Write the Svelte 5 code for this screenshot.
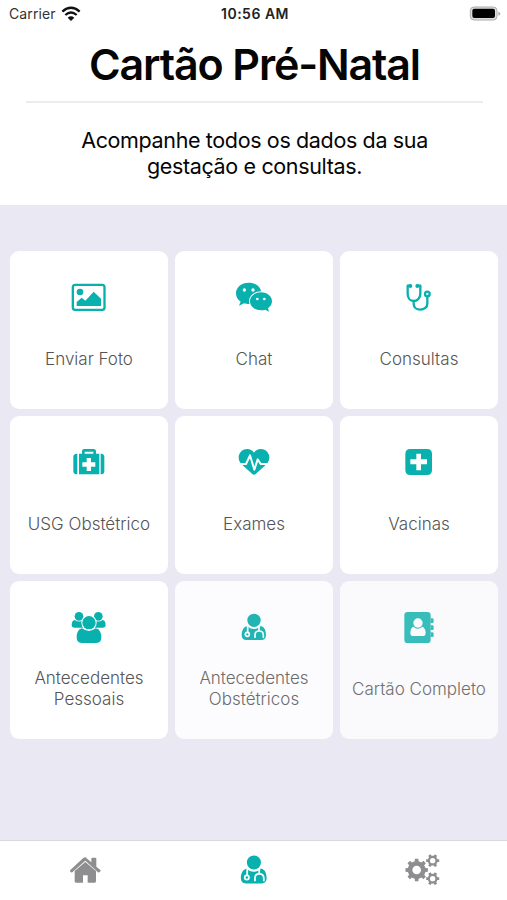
<script lang="ts">
  type Card = { icon: string; lines: string[]; fade?: string };

  const cards: Card[] = [
    { icon: 'photo', lines: ['Enviar Foto'] },
    { icon: 'chat', lines: ['Chat'] },
    { icon: 'stethoscope', lines: ['Consultas'] },
    { icon: 'medkit', lines: ['USG Obstétrico'] },
    { icon: 'heartbeat', lines: ['Exames'] },
    { icon: 'plus', lines: ['Vacinas'] },
    { icon: 'users', lines: ['Antecedentes', 'Pessoais'] },
    { icon: 'doctor', lines: ['Antecedentes', 'Obstétricos'], fade: 'soft' },
    { icon: 'contacts', lines: ['Cartão Completo'], fade: 'softer' }
  ];

  const tabs = [
    { icon: 'home', label: 'Início' },
    { icon: 'doctor', label: 'Pré-Natal' },
    { icon: 'gears', label: 'Ajustes' }
  ];

  let activeTab = $state('doctor');

  // Gear outline with square teeth and a round hole
  function gear(cx: number, cy: number, outer: number, inner: number, hole: number, teeth: number, turn = 0) {
    const step = (Math.PI * 2) / teeth;
    const points: string[] = [];
    for (let i = 0; i < teeth; i++) {
      const a = i * step + turn;
      for (const [r, d] of [[inner, -0.27], [outer, -0.2], [outer, 0.2], [inner, 0.27]]) {
        const x = cx + r * Math.cos(a + d * step);
        const y = cy + r * Math.sin(a + d * step);
        points.push(`${x.toFixed(1)} ${y.toFixed(1)}`);
      }
    }
    return `M${points.join('L')}ZM${cx - hole} ${cy}a${hole} ${hole} 0 1 0 ${hole * 2} 0a${hole} ${hole} 0 1 0 ${-hole * 2} 0Z`;
  }
</script>

{#snippet doctor()}
  <circle cx="87" cy="61" r="20" />
  <path d="M67 78c5 6 12 9 20 9s15-3 20-9c11 2 16 14 16 27 0 10-5 15-14 15H64c-9 0-14-5-14-15 0-13 6-25 17-27Z" />
  <g class="cut">
    <path d="M68 77v20M90 112v-7c0-8 4-12 12-12s13 5 13 12v7M102 93V78" />
    <circle cx="67" cy="103" r="6" />
  </g>
{/snippet}

<div class="screen">
  <div class="status">
    <div class="carrier">
      <span>Carrier</span>
      <svg width="20" height="16" viewBox="0 0 60 48">
        <path class="wave" d="M4 17Q30-6 56 17M13 27q17-15 34 0" />
        <path d="M30 45 20 35q10-8 20 0Z" />
      </svg>
    </div>
    <span class="time">10:56 AM</span>
    <svg class="battery" width="32" height="16" viewBox="0 0 96 48">
      <rect class="shell" x="4" y="3" width="80" height="39" rx="11" />
      <rect x="10" y="8" width="68" height="28" rx="6" />
      <path class="tip" d="M88 17q6 2 6 6t-6 6Z" />
    </svg>
  </div>

  <header>
    <h1>Cartão Pré-Natal</h1>
    <p>Acompanhe todos os dados da sua<br />gestação e consultas.</p>
  </header>

  <main>
    {#each cards as card}
      <button class="card {card.fade ?? ''}">
        <svg width="58" height="50" viewBox="0 0 174 150">
          {#if card.icon === 'photo'}
            <rect class="line" x="38.500" y="44.500" width="95" height="75" rx="7" stroke-width="7" />
            <circle cx="60" cy="66" r="10" />
            <path d="M50 108V96l15-13 11 9 25-27 22 21v22Z" />
          {:else if card.icon === 'chat'}
            <path d="M71 38c-22 0-38 14-38 32 0 11 5 19 14 25l-5 12 15-7c5 2 9 2 14 2 22 0 38-14 38-32S93 38 71 38Z" />
            <circle class="hole" cx="58" cy="60" r="5" />
            <circle class="hole" cx="84" cy="60" r="5" />
            <path class="halo" d="M108 67c-19 0-33 12-33 27s14 27 33 27c5 0 9-1 13-2l11 6-3-10c7-5 12-12 12-21 0-15-14-27-33-27Z" />
            <circle class="hole" cx="97" cy="87" r="4" />
            <circle class="hole" cx="118" cy="87" r="4" />
          {:else if card.icon === 'stethoscope'}
            <path class="line" stroke-width="7" d="M61 47h-8v24c0 14 8 22 18 22s20-8 20-22V47h-9M71 93v8c0 10 8 18 20 18s21-8 21-18V79" />
            <circle cx="61" cy="48" r="6" />
            <circle cx="82" cy="48" r="6" />
            <circle class="ring" cx="112" cy="72" r="7" />
          {:else if card.icon === 'medkit'}
            <path d="M52 56v62h-2c-7 0-10-4-10-10V66c0-6 3-10 10-10ZM122 56v62h2c6 0 9-4 9-10V66c0-6-3-10-9-10Z" />
            <path fill-rule="evenodd" d="M57 56h9v-7q0-7 7-7h28q7 0 7 7v7h10v62H57ZM74 56h26v-6H74ZM80 69v13H67v13h13v13h13V95h13V82H93V69Z" />
          {:else if card.icon === 'heartbeat'}
            <path d="M87 53C79 39 59 39 49 49c-11 11-10 26-1 37l34 31q5 5 10 0l34-31c9-11 10-26-1-37-10-10-30-10-38 4Z" />
            <path class="pulse" d="M39 87h24l12-26 13 43 10-31 9 14h28" />
          {:else if card.icon === 'plus'}
            <path fill-rule="evenodd" d="M61 42h50q15 0 15 15v48q0 15-15 15H61q-15 0-15-15V57q0-15 15-15ZM79 56v17H61v15h18v18h14V88h18V73H93V56Z" />
          {:else if card.icon === 'users'}
            <circle cx="57" cy="49" r="13" />
            <circle cx="115" cy="49" r="13" />
            <path d="M44 60q14 9 26 1c-5 8-5 14-1 22H44q-9 0-9-8c0-8 3-14 9-15ZM128 60q-14 9-26 1c5 8 5 14 1 22h25q9 0 9-8c0-8-3-14-9-15Z" />
            <path d="M66 85q21 16 41 0c12 2 17 14 17 27q0 17-15 17H65q-15 0-15-17c0-13 5-25 16-27Z" />
            <circle class="halo" cx="87" cy="68" r="20" />
          {:else if card.icon === 'doctor'}
            {@render doctor()}
          {:else if card.icon === 'contacts'}
            <path d="M53 36h59q10 0 10 10v73q0 10-10 10H53q-10 0-10-10V46q0-10 10-10Z" />
            <path d="M122 55h5q4 0 4 4v6q0 4-4 4h-5ZM122 76h5q4 0 4 4v6q0 4-4 4h-5ZM122 97h5q4 0 4 4v6q0 4-4 4h-5Z" />
            <circle class="hole" cx="84" cy="69" r="14" />
            <path class="hole" d="M70 80q14 12 27 0c6 2 10 9 10 18 0 7-3 10-8 10H69c-5 0-8-3-8-10 0-9 3-16 9-18Z" />
          {/if}
        </svg>
        <span class="label">
          {#each card.lines as line}
            <span>{line}</span>
          {/each}
        </span>
      </button>
    {/each}
  </main>

  <nav>
    {#each tabs as tab}
      <button class="tab" class:active={activeTab === tab.icon} aria-label={tab.label} onclick={() => (activeTab = tab.icon)}>
        <svg width="60" height="59" viewBox="0 0 180 177">
          {#if tab.icon === 'home'}
            <path d="M91 63 59 90v31q0 4 4 4h21v-22h14v22h21q4 0 4-4V90Z" />
            <path d="m91 49 18 15V53q0-3 3-3h9q3 0 3 3v24l12 10q2 2 0 4l-3 3q-2 1-4 0L91 59 52 94q-2 1-4 0l-3-3q-1-2 1-4l38-35q7-6 14 0Z" />
          {:else if tab.icon === 'doctor'}
            <g transform="translate(-2.500 0) scale(1.060)">{@render doctor()}</g>
          {:else}
            <path fill-rule="evenodd" d={gear(71, 87, 34, 27, 13, 8)} />
            <path fill-rule="evenodd" d={gear(119, 59, 20, 15, 8, 6)} />
            <path fill-rule="evenodd" d={gear(119, 113, 20, 15, 8, 6)} />
          {/if}
        </svg>
      </button>
    {/each}
  </nav>
</div>

<style>
  :global(body) {
    margin: 0;
  }

  .screen {
    height: 900px;
    display: flex;
    flex-direction: column;
    background: #eae8f2;
    color: #050505;
    font-family: Inter, "Liberation Sans", sans-serif;
  }

  .status {
    height: 27px;
    padding: 0 6px 0 9px;
    display: grid;
    grid-template-columns: 1fr auto 1fr;
    align-items: center;
    background: white;
    font-size: 14px;
  }

  .carrier {
    display: flex;
    align-items: center;
    gap: 5px;
    color: #333;
    letter-spacing: 0.1px;
  }

  .carrier svg {
    fill: #111;
  }

  .wave {
    fill: none;
    stroke: #111;
    stroke-width: 7;
  }

  .time {
    font-weight: 600;
    letter-spacing: 0.5px;
    color: #222;
  }

  .battery {
    justify-self: end;
  }

  .shell {
    fill: #ddd;
    stroke: #aaa;
    stroke-width: 3;
  }

  .tip {
    fill: #aaa;
  }

  header {
    height: 178px;
    box-sizing: border-box;
    padding: 7px 24px 0 26px;
    background: white;
    text-align: center;
  }

  h1 {
    margin: 0;
    height: 67px;
    border-bottom: 2px solid #ececee;
    font-size: 43px;
    line-height: 60px;
    font-weight: 600;
    letter-spacing: -1.15px;
  }

  p {
    margin: 24px 0 0;
    font-size: 21.5px;
    line-height: 26px;
    letter-spacing: -0.36px;
  }

  main {
    flex: 1;
    padding: 46px 9px 0 10px;
    display: grid;
    grid-template-columns: repeat(3, 158px);
    grid-auto-rows: 158px;
    gap: 7px;
  }

  button {
    border: 0;
    font: inherit;
    cursor: pointer;
  }

  .card {
    --paper: #fff;
    padding: 19px 0 0;
    display: flex;
    flex-direction: column;
    align-items: center;
    background: var(--paper);
    border-radius: 9px;
    color: #555;
    fill: #08b0ae;
    stroke: none;
  }

  .card.soft {
    --paper: #fcfcfe;
    color: #6c6c6c;
    fill: #20b5b3;
  }

  .card.softer {
    --paper: #faf9fc;
    color: #707070;
    fill: #38bdbb;
  }

  .card svg {
    flex: none;
  }

  .label {
    height: 78px;
    display: flex;
    flex-direction: column;
    justify-content: center;
    font-size: 17px;
    line-height: 21px;
    font-weight: 300;
    white-space: nowrap;
  }

  .line {
    fill: none;
    stroke: #08b0ae;
    stroke-linecap: round;
    stroke-linejoin: round;
  }

  .ring {
    fill: none;
    stroke: #08b0ae;
    stroke-width: 7;
  }

  .hole {
    fill: var(--paper);
  }

  .halo {
    stroke: var(--paper);
    stroke-width: 6;
    paint-order: stroke;
  }

  .pulse {
    fill: none;
    stroke: var(--paper);
    stroke-width: 6;
    stroke-linejoin: round;
  }

  .cut {
    fill: none;
    stroke: var(--paper);
    stroke-width: 5;
    stroke-linecap: round;
  }

  nav {
    height: 60px;
    box-sizing: border-box;
    border-top: 1px solid #d9d8df;
    display: grid;
    grid-template-columns: repeat(3, 1fr);
    background: white;
  }

  .tab {
    --paper: #fff;
    padding: 0;
    display: flex;
    justify-content: center;
    background: none;
    fill: #8e8e91;
  }

  .tab.active {
    fill: #08b0ae;
  }
</style>
